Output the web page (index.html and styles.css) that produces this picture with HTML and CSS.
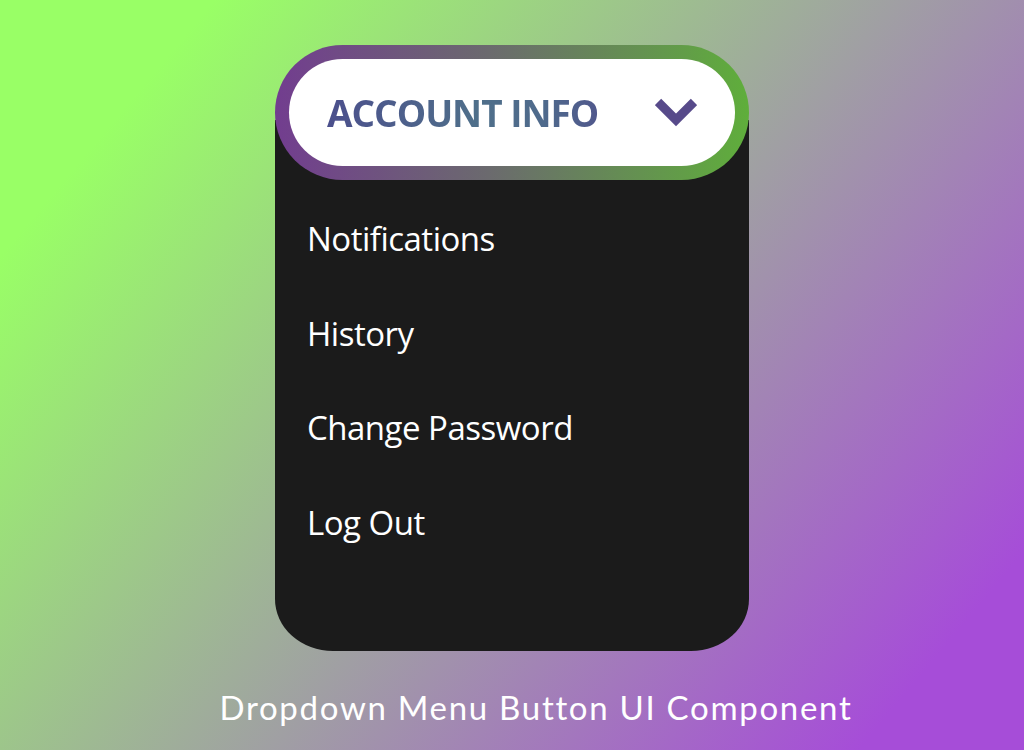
FILE: index.html
```html
<!DOCTYPE html>
<html>
    <head>
        <meta charset="UTF-8">
        <meta name="viewport" content="width=device-width,initial-scale=1">
        <title>Dropdown Menu Button</title>
        <link rel="stylesheet" href="styles.css">
    </head>
    <body>
        <div class="page-container">
            <div class="dropdown">
                <div class="dropdown-toggle">
                    <div class="toggle-inner">
                        <span class="toggle-label">ACCOUNT INFO</span>
                        <svg class="chevron" width="42" height="30" viewBox="0 0 42 30">
                            <polyline points="3,4 21,22 39,4" fill="none" stroke="#574a8a" stroke-width="9"></polyline>
                        </svg>
                    </div>
                </div>
                <ul class="menu">
                    <li class="menu-item">Notifications</li>
                    <li class="menu-item">History</li>
                    <li class="menu-item">Change Password</li>
                    <li class="menu-item">Log Out</li>
                </ul>
            </div>
            <p class="caption">Dropdown Menu Button UI Component</p>
        </div>
    </body>
</html>
```

FILE: styles.css
```css
*, *::before, *::after {
    box-sizing: border-box;
}
html, body {
    margin: 0;
    padding: 0;
}
body {
    width: 1024px;
    height: 750px;
    overflow: hidden;
    background: linear-gradient(130deg, #99ff66 13%, #a64dd8 90%);
}
.page-container {
    display: flex;
    flex-direction: column;
    align-items: center;
    padding-top: 45px;
}
.dropdown {
    width: 474px;
}
.dropdown-toggle {
    position: relative;
    z-index: 2;
    padding: 14px;
    border-radius: 70px;
    background: linear-gradient(to right, #723d8f, #6b6a6e 45%, #5fae3b);
}
.toggle-inner {
    display: flex;
    align-items: center;
    justify-content: space-between;
    height: 107px;
    padding: 0 38px 0 38px;
    background-color: #ffffff;
    border-radius: 54px;
}
.toggle-label {
    font-family: "Open Sans", sans-serif;
    font-weight: 700;
    font-size: 37px;
    letter-spacing: -1px;
    background: linear-gradient(to right, #4b4f8c, #4f6f8a 55%, #4f6a8c 80%, #50588c);
    -webkit-background-clip: text;
    background-clip: text;
    color: transparent;
}
.chevron {
    display: block;
}
.menu {
    list-style: none;
    margin: -60px 0 0 0;
    padding: 72px 0 81px 32px;
    background-color: #1b1b1b;
    border-radius: 0 0 58px 58px / 0 0 52px 52px;
}
.menu-item {
    font-family: "Open Sans", sans-serif;
    font-size: 33px;
    line-height: 94.5px;
    letter-spacing: -0.5px;
    color: #ffffff;
}
.caption {
    margin: 0;
    padding: 36px 0 0 48px;
    font-family: Lato, sans-serif;
    font-size: 33px;
    letter-spacing: 1.7px;
    color: #ffffff;
}
```
